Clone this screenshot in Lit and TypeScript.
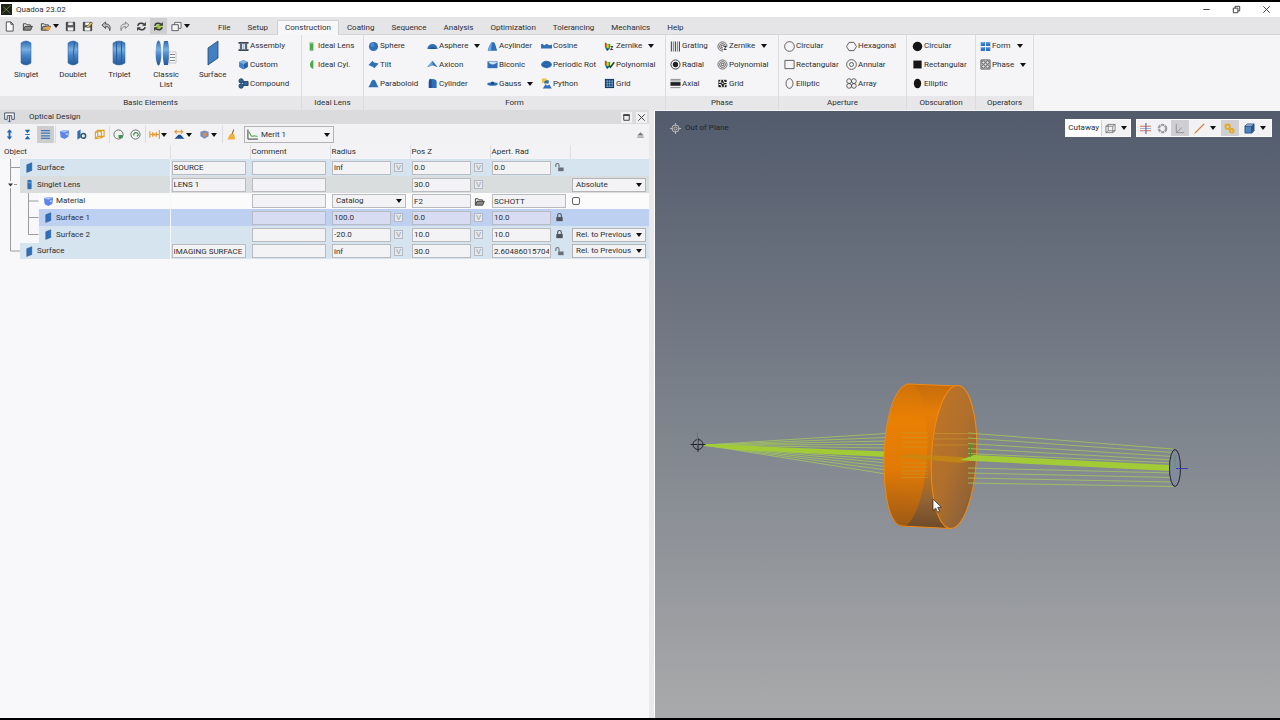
import { LitElement, html, svg, css, nothing, TemplateResult } from "lit";
import { customElement } from "lit/decorators.js";
import { classMap } from "lit/directives/class-map.js";

const BLUE = "#2f6fb8";
const DEEP = "#1f4f8c";
const SKY = "#6ea8dc";

const range = (n: number) => Array.from({ length: n }, (_, i) => i);

const folder = (fill: string) => svg`
  <path d="M1.5 10V3h3l1 1.2h3.6v1.5" fill="#e9e9e6" stroke="#3c3c3c"/>
  <path d="M1.5 10 3.3 5.8h8L9.4 10z" fill=${fill} stroke="#3c3c3c"/>`;
const disk = svg`
  <path d="M1.5 1.5h9v9h-9z" fill="#5a5a5a" stroke="#333"/>
  <path d="M3.5 1.5h5v3h-5z" fill="#eee"/><path d="M3 7h6v3.5H3z" fill="#f4f4f4"/>`;
const cycle = svg`
  <path d="M2 5.2C2.4 2.6 6 1.4 8.6 3.4M10 6.8C9.600 9.400 6 10.600 3.400 8.600" fill="none" stroke="#3a3a3a" stroke-width="1.700"/>
  <path d="M10.800 1v4.200H6.600zM1.200 11V6.800h4.200z" fill="#3a3a3a"/>`;
const cube = (a: string, b: string, c: string) => svg`
  <path d="M6 .8 10.800 3 6 5.400 1.200 3z" fill=${a}/>
  <path d="M1.200 3 6 5.400v6L1.200 8.800z" fill=${b}/><path d="M10.800 3 6 5.400v6l4.800-2.600z" fill=${c}/>`;
const rings = svg`
  <circle cx="6" cy="6" r="5" fill="none" stroke="#555" stroke-width=".9"/>
  <circle cx="6" cy="6" r="3.200" fill="none" stroke="#444" stroke-width=".9"/>
  <circle cx="6" cy="6" r="1.400" fill="none" stroke="#333" stroke-width=".9"/>`;
const heat = svg`
  <path d="M1 1.500 4 3.500 7 3 6.500 8.500 3.500 11 1 7z" fill="#2fae3c"/>
  <path d="M1 1.500 3 2.800v4L1 6z" fill="#e8391c"/><path d="M3 3.200 5 4v4L3 7z" fill="#f5d21b"/>
  <path d="M3.500 11 1.800 8.200 5.500 8z" fill="#1c49c9"/>`;

const ICONS: Record<string, TemplateResult> = {
  new: svg`<path d="M2.500 1h5l2.500 2.600V11H2.500zM7.500 1v2.600H10" fill="#fff" stroke="#444"/>`,
  open: folder("#8a8a84"),
  openStar: svg`${folder("#b9a98a")}<circle cx="9" cy="8" r="2.400" fill="#f0a63a"/>`,
  save: disk,
  saveAs: svg`${disk}<path d="m5 6 5-5 1.500 1.500-5 5z" fill="#e8c94a" stroke="#444" stroke-width=".6"/>`,
  undo: svg`<path d="M1 4.500 5 1v2.200c4 0 6 2.300 4.600 7.300C9 7.300 7.500 6 5 6v2.200z" fill="#bbb" stroke="#3f3f3f" stroke-width=".9"/>`,
  redo: svg`<path d="M11 4.500 7 1v2.200c-4 0-6 2.300-4.600 7.300C3 7.300 4.500 6 7 6v2.200z" fill="#ddd" stroke="#777" stroke-width=".9"/>`,
  cycle,
  cycleAuto: svg`<path d="M3 9 4 4l4-1 1 5-3 2z" fill="#9acb3c"/>${cycle}`,
  windows: svg`<path d="M4 1.500h7v6.500H4z" fill="#f2f2f2" stroke="#666"/><path d="M1 4h7v6.500H1z" fill="#f2f2f2" stroke="#555"/>`,
  assembly: svg`<path d="M.5 1h11v2h-11zM.5 9h11v2h-11z" fill="#3b4654"/><path d="M2 3h2.400v6H2zM7.600 3H10v6H7.600z" fill="#58697e"/><path d="M5 3h2v6H5z" fill="#b9c8d8"/>`,
  custom: cube("#7db0e0", "#3f7fc6", "#265f9f"),
  compound: svg`<g fill="#31649c" stroke="#1d3858" stroke-width=".9"><circle cx="3.400" cy="3.200" r="2.400"/><circle cx="3.400" cy="8.800" r="2.400"/><path d="M6 3.800h5v4.400H6z"/></g>`,
  idealLens: svg`<path d="M4 1.500h4v9H4z" fill="#4ba84b"/><ellipse cx="6" cy="1.800" rx="2" ry="1" fill="#a8dba0"/><ellipse cx="6" cy="10.200" rx="2" ry="1" fill="#88c982"/>`,
  idealCyl: svg`<path d="M8 1C3 3 3 9 8 11z" fill="#4ba84b"/>`,
  sphere: svg`<circle cx="6" cy="6" r="5" fill=${BLUE}/><circle cx="4.800" cy="4.400" r="2.200" fill=${SKY} opacity=".5"/>`,
  tilt: svg`<path d="M.5 6.500 5 2l1.500 1.700L11.500 5 7 10 5.500 8.600z" fill=${BLUE}/>`,
  paraboloid: svg`<path d="M.4 10C2.500 8.500 3 2 6 2s3.500 6.500 5.600 8z" fill=${BLUE}/>`,
  asphere: svg`<path d="M.2 8.600C1.500 1.500 10.500 1.500 11.800 8.600L6 7z" fill=${BLUE}/><path d="M.2 8.600 6 6.500l5.800 2.100z" fill=${DEEP}/>`,
  axicon: svg`<path d="M.2 9 6 2l5.800 7L6 6.800z" fill=${BLUE}/><path d="M6 2v4.800L.2 9z" fill=${SKY}/>`,
  cylinder: svg`<path d="M2 10.800V4c0-4 8.500-4 8.500 0v6.800z" fill=${BLUE}/><path d="M2 4c0-4 2.500-3.500 3-2.500v9.300H2z" fill=${DEEP}/>`,
  acylinder: svg`<path d="M.8 10.500C2 7 3.500 1 6.500 1s3 6 4.700 9.500z" fill=${BLUE}/><path d="M.8 10.500C2 7 3.500 1 6 1c-1 2-1.500 7-1.500 9.500z" fill=${SKY}/>`,
  biconic: svg`<path d="M.5 2.500h11v7.500H.5z" fill=${BLUE}/><path d="M1.500 3C4 7 8 7 11.500 3z" fill="#cfe2f4"/>`,
  gauss: svg`<ellipse cx="6" cy="6.500" rx="5.800" ry="2" fill=${BLUE}/><ellipse cx="6" cy="5.600" rx="2" ry="1.700" fill=${DEEP}/>`,
  cosine: svg`<path d="M0 3.800c1-1 1.500-1 2.500 0s1.500 1 2.500 0 1.500-1 2.500 0 2.500 1 4.500 0v4.400H0z" fill=${BLUE}/>`,
  periodic: svg`<ellipse cx="6" cy="6" rx="5.900" ry="4" fill=${BLUE}/><ellipse cx="6" cy="6" rx="3.300" ry="1.900" fill="none" stroke=${DEEP} stroke-width=".8"/>`,
  python: svg`<path d="M1 .5h5v4.500H3.500L1 6z" fill="#e9c33c"/><path d="M5.500 2.500H8.500V6H3.500V4z" fill="#3a6ea5"/><path d="M2 11.500 5 6.500l1.500 2L9 7l2.800 4.500z" fill=${BLUE}/>`,
  zernikeForm: svg`${heat}<text x="6.500" y="10" font-size="7" font-weight="700" fill="#222">z</text>`,
  polyForm: svg`${heat}<path d="M5.500 7 7 9l4.200-5.500" fill="none" stroke="#1d4a2b" stroke-width="1.800"/>`,
  gridForm: svg`<path d="M1 1h10v10H1z" fill="#16365e"/><path d="M2 3.500h8M2 6.200h8M2 9h8M3.500 2v8M6.200 2v8M9 2v8" stroke=${SKY} stroke-width=".9"/>`,
  grating: svg`${range(5).map((i) => svg`<path d=${`M${1.5 + i * 2.2} .5v11`} stroke=${i % 2 ? "#8a8a8a" : "#4a4a4a"} stroke-width="1.200"/>`)}`,
  radial: svg`<circle cx="6" cy="6" r="5" fill="none" stroke="#333"/><circle cx="6" cy="6" r="2.900" fill="#222"/>`,
  axial: svg`<path d="M.5 4.500h11v4H.5z" fill="#222"/><path d="M.5 1.500h11M.5 3.200h11M.5 10.500h11" stroke="#777" stroke-width=".9"/>`,
  zernikePhase: svg`${rings}<path d="M6.500 6H12v6H6.500z" fill="#f6f6f8"/><text x="7" y="10" font-size="7" font-weight="700" fill="#222">z</text>`,
  polyPhase: rings,
  gridPhase: svg`<path d="M1.500 2h9v8h-9z" fill="#222"/><path d="M4 2v2.500H2M7 2l1 3h3M5.500 10 4 7H2M8 10V7.500l3-.5M5 5l2 1.500" stroke="#eee" stroke-width="1.100" fill="none"/>`,
  circle: svg`<circle cx="6" cy="6" r="5.300" fill="none" stroke="#444" stroke-width=".9"/>`,
  rect: svg`<path d="M1 1.500h10v9H1z" fill="none" stroke="#444" stroke-width=".9"/>`,
  ellipse: svg`<ellipse cx="6" cy="6" rx="3.800" ry="5.300" fill="none" stroke="#444" stroke-width=".9"/>`,
  hexagon: svg`<path d="M3.300 1.500h5.400L11.400 6l-2.700 4.500H3.300L.6 6z" fill="none" stroke="#444" stroke-width=".9"/>`,
  annular: svg`<g fill="none" stroke="#444" stroke-width=".9"><circle cx="6" cy="6" r="5.300"/><circle cx="6" cy="6" r="2.200"/></g>`,
  array: svg`<g fill="none" stroke="#444" stroke-width=".9"><circle cx="3.400" cy="3.400" r="2.600"/><circle cx="8.600" cy="3.400" r="2.600"/><circle cx="3.400" cy="8.600" r="2.600"/><circle cx="8.600" cy="8.600" r="2.600"/></g>`,
  circleFill: svg`<circle cx="6" cy="6" r="5.200" fill="#151515"/>`,
  rectFill: svg`<path d="M1.500 1.700h9v8.600h-9z" fill="#151515"/>`,
  ellipseFill: svg`<ellipse cx="6" cy="6" rx="4" ry="5.300" fill="#151515"/>`,
  opForm: svg`<path d="M.8 1.200h4.700v4.300H.8zM6.500 1.200h4.700v4.300H6.500zM.8 6.500h4.700v4.300H.8zM6.500 6.500h4.700v4.300H6.500z" fill="#2f74c4"/><path d="M1 2h4M7 2h4M1 7.300h4M7 7.300h4" stroke="#8fc0ee"/>`,
  opPhase: svg`<g fill="#e5e5e5" stroke="#333" stroke-width=".8"><path d="M1 1h10v10H1z"/><circle cx="3.800" cy="3.800" r="1.800"/><circle cx="8.200" cy="3.800" r="1.800"/><circle cx="3.800" cy="8.200" r="1.800"/><circle cx="8.200" cy="8.200" r="1.800"/></g>`,
  expand: svg`<path d="M6 .3 9 3.700H7v4.600h2L6 11.700 3 8.300h2V3.700H3z" fill="#1f66b0"/>`,
  collapse: svg`<path d="M3 .8h6L6 4.600zM3 11.200h6L6 7.400z" fill="#1f66b0"/><path d="M3.500 6h5" stroke="#1f66b0"/>`,
  rows: svg`<path d="M1 1.700h10M1 4.500h10M1 7.400h10M1 10.300h10" stroke="#3f78b5" stroke-width="1.300"/>`,
  material: svg`<path d="M1 2.500 6 1l5 1-.8 6.500L6 11 1.800 9z" fill="#5c84ea"/><path d="m1 2.500 5 1.700 5-2.200L6 1z" fill="#a9c0fa"/><path d="m7 5.500 2.500-1.200L9 7z" fill="#d9e4ff"/>`,
  surfaceGear: svg`<path d="M1.500 2.500 5 .5v9l-3.500 2z" fill=${BLUE}/><circle cx="8" cy="7.500" r="2.500" fill="none" stroke="#35566f" stroke-width="1.700"/>`,
  box: svg`<g fill="none" stroke="#e0a021" stroke-width="1.200"><path d="M1.500 3.500 8 2.500v7l-6.500 1z"/><path d="M4 1.500h7v6.500H4zM1.500 3.500 4 1.500M8 9.500l3-1.500M1.500 10.500 4 8"/></g>`,
  refreshLock: svg`<circle cx="6" cy="6" r="5" fill="none" stroke="#4a5a52" stroke-width=".9"/><path d="M6 6.500h4.500V10H6z" fill="#46924f"/>`,
  refreshOpen: svg`<circle cx="6" cy="6" r="5" fill="none" stroke="#4a5a52" stroke-width=".9"/><path d="M4 7c0-4 5-4 5-.5L7.500 8" fill="none" stroke="#46924f" stroke-width="1.300"/>`,
  spacing: svg`<path d="M1 2.500v7M4 3.500v5M8 3.500v5M11.300 1v10" stroke="#e8952c" stroke-width="1.200"/><path d="M1 6h10" stroke="#e8952c"/><path d="m4.500 4 2 2-2 2M7.500 4l-2 2 2 2" fill="none" stroke="#e8952c" stroke-width=".8"/>`,
  fitLens: svg`<path d="M.5 10.500C2.500 9.500 4 6 6 6s3.500 3.500 5.500 4.500z" fill=${DEEP}/><path d="M1 3h8M3 1 1 3l2 2M7.500 1l2 2-2 2" stroke="#e8952c" fill="none" stroke-width="1.200"/>`,
  lensBox: svg`<path d="M1.500 3 6 1.500 10.500 3v5L6 10.500 1.500 8z" fill="#7a90b8"/><circle cx="6.500" cy="6" r="2.200" fill="#d98b5a"/>`,
  broom: svg`<path d="M8.500.5 6.500 6" stroke="#a86a1c" stroke-width="1.200"/><path d="M4.500 5.500h4.500L10 11.500H1.500z" fill="#f0b13a"/>`,
  curve: svg`<path d="M1 .5V11h11" fill="none" stroke="#333"/><path d="M1.500 3c2 0 2 5 4 5s2-1 3-.5 1.500.5 3 .5" fill="none" stroke="#4aa03a" stroke-width="1.100"/>`,
  surface: svg`<path d="M3 3 8.500.8v8.400L3 11.400z" fill=${BLUE} stroke=${DEEP} stroke-width=".5"/>`,
  singlet: svg`<path d="M3.700 1.500Q6 0 8.300 1.500v9Q6 12 3.700 10.500z" fill=${BLUE}/><path d="M3.700 4h4.600" stroke=${SKY}/>`,
  lock: svg`<path d="M2.500 5.500h7V10h-7z" fill="#50555c"/><path d="M4 5.500v-2c0-2.500 4-2.500 4 0v2" fill="none" stroke="#50555c" stroke-width="1.200"/>`,
  unlock: svg`<path d="M4.500 6h6v4h-6z" fill="#6a7178"/><path d="M2 5.500v-2c0-2.500 3.500-2.500 3.500 0V6" fill="none" stroke="#6a7178" stroke-width="1.200"/>`,
  dock: svg`<path d="M.7 1h10.600v7H8.500V4h-5v4H.7z" fill="#f4f6f8" stroke="#3e4f63"/><path d="M6 4v7M4.500 9.500 6 11l1.500-1.500" stroke="#2a62a8" fill="none"/>`,
  app: svg`<path d="M0 0h12v12H0z" fill="#1d231b"/><path d="m1.500 10 9-8.500M2.500 3l7 6.500" stroke="#8c9a45" stroke-width=".8"/>`,
  wire: svg`<g fill="none" stroke="#666" stroke-width=".8"><path d="M1 3.500h7.500v7H1zM3.500 1.500H11v7H3.500zM1 3.500l2.500-2M8.500 3.500l2.500-2M8.500 10.500l2.500-2M1 10.500l2.500-2"/></g>`,
  align: svg`<path d="M0 3.500h12M0 8.500h12" stroke="#e0705c" stroke-width="1.200"/><path d="M0 6h12" stroke="#9aa8c8"/><path d="M6.500 0v12" stroke="#3b6cb4" stroke-width="1.200"/>`,
  aperture: svg`<circle cx="6" cy="6" r="4" fill="none" stroke="#9a9da2" stroke-width="2.600" stroke-dasharray="3.400 .8"/>`,
  axes: svg`<path d="M2.500 1v9.500H11M2.500 10.500 8.500 5" fill="none" stroke="#8d9196"/>`,
  ray: svg`<path d="M1 11 11 1" stroke="#dd7a28" stroke-width="1.400"/>`,
  gears: svg`<g fill="none" stroke="#e5a91e" stroke-width="2"><circle cx="4" cy="4" r="2.400"/><circle cx="8.500" cy="8.500" r="2"/></g>`,
  solid: svg`<path d="M1 3.500h7.500V11H1z" fill="#4f83bb" stroke="#24466e" stroke-width=".8"/><path d="M1 3.500 3.500 1H11L8.500 3.500z" fill="#9cc0e4" stroke="#24466e" stroke-width=".8"/><path d="M8.500 3.500 11 1v7.300L8.500 11z" fill="#2f5e94" stroke="#24466e" stroke-width=".8"/>`,
  target: svg`<g fill="none" stroke="#c4c1b8"><circle cx="6" cy="6" r="3.900"/><circle cx="6" cy="6" r="1.700"/><path d="M6 0v3M6 9v3M0 6h3M9 6h3"/></g>`,
  eject: svg`<path d="M2.500 7 6 3.500 9.500 7z" fill="#777"/><path d="M2.500 8.800h7" stroke="#777"/>`,
  min: svg`<path d="M2.500 6h7" stroke="#333"/>`,
  restore: svg`<path d="M2.500 4.500h5v5h-5zM4.500 4.500v-2h5v5h-2" fill="none" stroke="#333"/>`,
  close: svg`<path d="m2.500 2.500 7 7M9.500 2.500l-7 7" stroke="#333"/>`,
  max: svg`<path d="M3 3h6v6H3z" fill="none" stroke="#333"/><path d="M2.500 3.500h7" stroke="#333" stroke-width="1.500"/>`,
};

const lensShape = (x: number, w: number) =>
  svg`<path d=${`M${x} 3Q${x + w / 2} -1 ${x + w} 3V23Q${x + w / 2} 27 ${x} 23Z`} fill="url(#glass)" stroke="#2b5f9c" stroke-width=".5"/>`;
const BIG: Record<string, TemplateResult> = {
  Singlet: lensShape(9, 10),
  Doublet: svg`${lensShape(9, 10)}<path d="M15.500 1.500q-2 11 0 23" fill="none" stroke="#2b5f9c"/>`,
  Triplet: svg`${lensShape(8, 12)}<path d="M11.500 1.500v23M16.500 1.500v23" stroke="#2b5f9c"/>`,
  "Classic List": svg`
    <ellipse cx="6.500" cy="13" rx="2.900" ry="12.500" fill="url(#glass)"/><path d="M12 1h4q2.500 12 0 24h-4q-2.500-12 0-24z" fill="url(#glass)"/>
    <path d="M17 12h7v11h-7z" fill="#fafafa" stroke="#aaa" stroke-width=".6"/><path d="M18 14.500h5M18 17.500h5M18 20.500h5" stroke="#666" stroke-width=".8"/>`,
  Surface: svg`<path d="M9 8 19 1v17L9 25z" fill="#4380c2" stroke="#24466e" stroke-width=".8"/>`,
};

const icon = (name: string) => html`<svg class="icon" viewBox="0 0 12 12" aria-hidden="true">${ICONS[name]}</svg>`;
const caret = html`<svg class="caret" viewBox="0 0 6 4" aria-hidden="true"><path d="M0 0h6L3 4z" fill="#111"/></svg>`;

const shared = css`
  * { box-sizing: border-box; }
  button, input, select, a { font: inherit; color: inherit; margin: 0; text-decoration: none; }
  button { border: 0; background: none; padding: 0; display: flex; align-items: center; }
  .icon { width: 11px; height: 11px; flex: none; display: block; overflow: visible; }
  .caret { width: 6px; height: 4px; flex: none; display: block; pointer-events: none; }
  .drop { display: grid; align-items: center; }
  .drop select {
    grid-area: 1 / 1; appearance: none; width: 100%; height: 14px; padding: 0 3px;
    border: 1px solid #b4b4b6; border-radius: 0; background: #f3f3f5; outline: 0;
  }
  .drop .caret { grid-area: 1 / 1; justify-self: end; margin-right: 4px; }
`;

type Item = [icon: string, label: string, menu?: boolean];
interface Group { name: string; cls: string; big?: string[]; columns: Item[][]; }

const GROUPS: Group[] = [
  {
    name: "Basic Elements", cls: "basic", big: ["Singlet", "Doublet", "Triplet", "Classic List", "Surface"],
    columns: [[["assembly", "Assembly"], ["custom", "Custom"], ["compound", "Compound"]]],
  },
  { name: "Ideal Lens", cls: "ideal", columns: [[["idealLens", "Ideal Lens"], ["idealCyl", "Ideal Cyl."]]] },
  {
    name: "Form", cls: "form", columns: [
      [["sphere", "Sphere"], ["tilt", "Tilt"], ["paraboloid", "Paraboloid"]],
      [["asphere", "Asphere", true], ["axicon", "Axicon"], ["cylinder", "Cylinder"]],
      [["acylinder", "Acylinder"], ["biconic", "Biconic"], ["gauss", "Gauss", true]],
      [["cosine", "Cosine"], ["periodic", "Periodic Rot"], ["python", "Python"]],
      [["zernikeForm", "Zernike", true], ["polyForm", "Polynomial"], ["gridForm", "Grid"]],
    ],
  },
  {
    name: "Phase", cls: "phase", columns: [
      [["grating", "Grating"], ["radial", "Radial"], ["axial", "Axial"]],
      [["zernikePhase", "Zernike", true], ["polyPhase", "Polynomial"], ["gridPhase", "Grid"]],
    ],
  },
  {
    name: "Aperture", cls: "aperture", columns: [
      [["circle", "Circular"], ["rect", "Rectangular"], ["ellipse", "Elliptic"]],
      [["hexagon", "Hexagonal"], ["annular", "Annular"], ["array", "Array"]],
    ],
  },
  { name: "Obscuration", cls: "obscuration", columns: [[["circleFill", "Circular"], ["rectFill", "Rectangular"], ["ellipseFill", "Elliptic"]]] },
  { name: "Operators", cls: "operators", columns: [[["opForm", "Form", true], ["opPhase", "Phase", true]]] },
];

const TABS = ["File", "Setup", "Construction", "Coating", "Sequence", "Analysis", "Optimization", "Tolerancing", "Mechanics", "Help"];
const QUICK: Item[] = [
  ["new", "New"], ["open", "Open"], ["openStar", "Open recent", true], ["save", "Save"], ["saveAs", "Save as"],
  ["undo", "Undo"], ["redo", "Redo"], ["cycle", "Update"], ["cycleAuto", "Auto update"], ["windows", "Windows", true],
];

@customElement("ribbon-bar")
class RibbonBar extends LitElement {
  static styles = [shared, css`
    :host { display: block; background: #f5f5f8; }
    .top { display: flex; align-items: flex-end; background: #e5e5e7; height: 18px; border-bottom: 1px solid #d4d4d6; }
    .quick { display: flex; align-items: center; width: 210px; height: 16px; }
    .quick button { width: 17px; height: 16px; justify-content: center; }
    .quick button:first-child { width: 19px; }
    .quick .menu { width: 26px; gap: 2px; }
    .quick .undo { width: 20px; }
    .quick .on { background: #cfcfd1; }
    .tabs { display: flex; height: 15px; margin-bottom: -1px; }
    .tabs button { padding: 0 8px; border: 1px solid transparent; border-width: 0 1px 0 0; height: 15px; }
    .tabs .active { background: #f7f7fa; border: 1px solid #d0d0d2; border-bottom: 0; padding: 0 7px; }
    .groups { display: flex; }
    .group { border-right: 1px solid #dcdcde; display: flex; flex-direction: column; flex: none; }
    .body { display: grid; height: 61px; padding: 2px 0 3px 4px; }
    .name { background: #e7e7e9; height: 14px; line-height: 14px; text-align: center; }
    .basic { width: 302px; } .basic .body { grid-template-columns: repeat(5, 1fr) 65px; padding-left: 3px; }
    .basic .col { padding-left: 2px; }
    .ideal { width: 62px; }
    .form { width: 302px; } .form .body { grid-template-columns: 59px 60px 54px 63px auto; }
    .phase { width: 113px; } .phase .body { grid-template-columns: 47px auto; }
    .aperture { width: 128px; } .aperture .body { grid-template-columns: 62px auto; padding-left: 5px; }
    .obscuration { width: 69px; } .obscuration .body { padding-left: 5px; }
    .operators { width: 58px; }
    .col { display: grid; grid-template-rows: repeat(3, 1fr); justify-items: start; white-space: nowrap; }
    .col button { gap: 1px; }
    .col .caret { margin-left: 5px; }
    .big { flex-direction: column; padding-top: 3px; line-height: 10px; text-align: center; gap: 4px; }
    .big svg { width: 28px; height: 26px; flex: none; }
    .big span { max-width: 32px; }
  `];

  render() {
    return html`
      <div class="top">
        <div class="quick">
          ${QUICK.map(([i, label, menu]) => html`
            <button class=${classMap({ menu: !!menu, on: i === "cycleAuto", undo: i === "undo" })} aria-label=${label}>${icon(i)}${menu ? caret : nothing}</button>`)}
        </div>
        <nav class="tabs">${TABS.map((t) => html`<button class=${classMap({ active: t === "Construction" })}>${t}</button>`)}</nav>
      </div>
      <div class="groups">${GROUPS.map((g) => html`
        <section class="group ${g.cls}">
          <div class="body">
            ${g.big?.map((b) => html`
              <button class="big">
                <svg viewBox="0 0 28 26" aria-hidden="true">
                  <defs><linearGradient id="glass" x2="0" y2="1"><stop offset="0" stop-color="#2d69ae"/><stop offset=".35" stop-color="#78afe2"/><stop offset=".6" stop-color="#4684c6"/><stop offset="1" stop-color="#24599a"/></linearGradient></defs>
                  ${BIG[b]}
                </svg><span>${b}</span>
              </button>`)}
            ${g.columns.map((c) => html`<div class="col">${c.map(([i, label, menu]) => html`
              <button>${icon(i)}<span>${label}</span>${menu ? caret : nothing}</button>`)}</div>`)}
          </div>
          <div class="name">${g.name}</div>
        </section>`)}
      </div>`;
  }
}

interface Field { value: string; kind?: "input" | "select" | "folder"; }
interface Row {
  label: string; icon: string; depth: number; tone: string;
  name?: string; radius?: Field; pos?: Field;
  ap?: string; lock?: string; mode?: string; tick?: boolean;
}
const ROWS: Row[] = [
  { label: "Surface", icon: "surface", depth: 1, tone: "blue", name: "SOURCE", radius: { value: "inf" }, pos: { value: "0.0" }, ap: "0.0", lock: "unlock" },
  { label: "Singlet Lens", icon: "singlet", depth: 1, tone: "grey", name: "LENS 1", pos: { value: "30.0" }, mode: "Absolute" },
  { label: "Material", icon: "material", depth: 2, tone: "plain", radius: { value: "Catalog", kind: "select" }, pos: { value: "F2", kind: "folder" }, ap: "SCHOTT", tick: true },
  { label: "Surface 1", icon: "surface", depth: 2, tone: "picked", radius: { value: "100.0" }, pos: { value: "0.0" }, ap: "10.0", lock: "lock" },
  { label: "Surface 2", icon: "surface", depth: 2, tone: "blue", radius: { value: "-20.0" }, pos: { value: "10.0" }, ap: "10.0", lock: "lock", mode: "Rel. to Previous" },
  { label: "Surface", icon: "surface", depth: 1, tone: "blue", name: "IMAGING SURFACE", radius: { value: "inf" }, pos: { value: "30.0" }, ap: "2.60486015704", lock: "unlock", mode: "Rel. to Previous" },
];
const TREE = [
  "M10.500 0v17M10.500 8.500h10",
  "M10.500 0v5M10.500 12v5M14 8.500h3",
  "M10.500 0v17M28.500 0v17M28.500 8.500h10",
  "M10.500 0v17M28.500 0v17M28.500 8.500h10",
  "M10.500 0v17M28.500 0v8.500h10",
  "M10.500 0v8.500h10",
];
const TOOLS: { icon: string; label: string; cls?: string; menu?: boolean }[] = [
  { icon: "expand", label: "Expand all" }, { icon: "collapse", label: "Collapse all" }, { icon: "rows", label: "Show rows", cls: "on" },
  { icon: "material", label: "Materials", cls: "sep" }, { icon: "surfaceGear", label: "Surface settings" }, { icon: "box", label: "Bounding box" },
  { icon: "refreshLock", label: "Update locked", cls: "sep" }, { icon: "refreshOpen", label: "Update" },
  { icon: "spacing", label: "Spacing", cls: "sep", menu: true }, { icon: "fitLens", label: "Fit", menu: true },
  { icon: "lensBox", label: "Lens view", menu: true }, { icon: "broom", label: "Clean up", cls: "last" },
];

@customElement("design-panel")
class DesignPanel extends LitElement {
  static styles = [shared, css`
    :host { display: block; background: #f8f8fa; border-right: 1px solid #fff; }
    .inner { padding-right: 5px; background: linear-gradient(to left, #e9e9eb 5px, transparent 5px); min-height: 100%; }
    .title { display: flex; align-items: center; height: 14px; background: #dbdbdd; padding: 0 2px 0 4px; }
    .title span { margin: 0 auto 0 14px; }
    .title button { margin-left: 4px; background: #f0f0f2; }
    .tools { display: flex; align-items: center; height: 21px; background: #f2f2f4; padding-left: 1px; }
    .tools button { width: 17px; height: 17px; justify-content: center; margin-right: 1px; }
    .tools .menu { width: 25px; gap: 1px; margin: 0; }
    .tools .on { background: #cdcdd0; }
    .tools .sep { border-left: 1px solid #dcdcde; }
    .tools .last { margin: 0 5px 0 2px; border-left: 1px solid #dcdcde; }
    .merit select { height: 17px; padding-left: 16px; }
    .merit .icon { grid-area: 1 / 1; z-index: 1; margin-left: 3px; }
    .tools .eject { margin: 0 0 0 auto; }
    table { width: 100%; table-layout: fixed; border-collapse: collapse; }
    th { text-align: left; font-weight: 400; height: 14px; padding: 0 1px; background: #f3f3f5; border-right: 1px solid #dedee0; }
    th:first-child { padding-left: 4px; } th:last-child { border: 0; }
    .w-object { width: 170px; } .w-name { width: 80px; }
    td { padding: 0 1px 0 2px; height: 17px; }
    tr:nth-child(3n) td { height: 16px; }
    td:first-child { padding: 0; border-right: 1px solid #f4f8fb; }
    td:nth-child(2) { padding-left: 1px; }
    .blue { --tone: #d5e4ef; } .grey { --tone: #dadddd; } .plain { --tone: #fbfbfc; } .picked { --tone: #bdd0f2; --box: #d8dcf3; }
    tbody td:not(:first-child), .label { background: var(--tone); }
    .object, .cell { display: flex; align-items: center; }
    .object { height: 100%; }
    .tree { flex: none; height: 17px; width: 20px; }
    .deep .tree { width: 39px; }
    .label { display: flex; align-items: center; flex: 1; align-self: stretch; gap: 2px; padding-left: 4px; height: 17px; }
    tr:nth-child(3n) .label, tr:nth-child(3n) .tree { height: 16px; }
    .cell { gap: 3px; }
    input.box { display: block; width: 74px; height: 14px; padding: 0 1px; border: 1px solid #b9bbbf; border-radius: 0; background: var(--box, #f3f3f5); outline: 0; }
    .cell.flagged input.box { width: 59px; }
    .v { width: 9px; height: 9px; border: 1px solid #b4b9c2; color: #9aa0aa; justify-content: center; line-height: 7px; background: #e6e9ee; }
    input[type="checkbox"] { appearance: none; width: 8px; height: 8px; border: 1px solid #666; border-radius: 2px; background: #fff; display: block; }
    .drop { width: 74px; }
    .cell .drop select { border-color: #b9bbbf; }
    .merit.drop { width: 90px; }
  `];

  private box(label: string, value = "") {
    return html`<input class="box" aria-label=${label} .value=${value}>`;
  }
  private drop(label: string, value: string) {
    return html`<div class="drop"><select aria-label=${label}><option>${value}</option></select>${caret}</div>`;
  }
  private field(label: string, f?: Field) {
    if (!f) return nothing;
    if (f.kind === "select") return html`<div class="cell">${this.drop(label, f.value)}</div>`;
    return html`<div class="cell flagged">${this.box(label, f.value)}
      ${f.kind === "folder" ? html`<button aria-label="Browse">${icon("open")}</button>` : html`<button class="v">V</button>`}</div>`;
  }

  render() {
    return html`<div class="inner">
      <div class="title">${icon("dock")}<span>Optical Design</span>
        <button aria-label="Float">${icon("max")}</button><button aria-label="Close">${icon("close")}</button></div>
      <div class="tools">
        ${TOOLS.map((t) => html`<button class="${t.cls ?? ""} ${t.menu ? "menu" : ""}" aria-label=${t.label}>${icon(t.icon)}${t.menu ? caret : nothing}</button>`)}
        <div class="drop merit">${icon("curve")}<select aria-label="Merit"><option>Merit 1</option></select>${caret}</div>
        <button class="eject" aria-label="Hide toolbar">${icon("eject")}</button>
      </div>
      <table>
        <thead><tr><th class="w-object">Object</th><th class="w-name"></th><th class="w-name">Comment</th><th class="w-name">Radius</th>
          <th class="w-name">Pos Z</th><th class="w-name">Apert. Rad</th><th></th></tr></thead>
        <tbody>${ROWS.map((r, i) => html`
          <tr class=${r.tone}>
            <td><div class="object ${r.depth > 1 ? "deep" : ""}">
              <svg class="tree" viewBox=${`0 0 ${r.depth > 1 ? 39 : 20} 17`} preserveAspectRatio="none" aria-hidden="true">
                <path d=${TREE[i]} fill="none" stroke="#9a9a9c"/>${i === 1 ? svg`<path d="M8 7.500h5l-2.500 3z" fill="#333"/>` : nothing}</svg>
              <div class="label">${icon(r.icon)}<span>${r.label}</span></div></div></td>
            <td>${r.name ? this.box("Name", r.name) : nothing}</td>
            <td>${this.box("Comment")}</td>
            <td>${this.field("Radius", r.radius)}</td>
            <td>${this.field("Pos Z", r.pos)}</td>
            <td>${r.ap ? html`<div class="cell ${r.lock ? "flagged" : ""}">${this.box("Aperture radius", r.ap)}${r.lock ? html`<button aria-label="Lock">${icon(r.lock)}</button>` : nothing}</div>` : nothing}</td>
            <td>${r.mode ? this.drop("Position mode", r.mode) : nothing}${r.tick ? html`<input type="checkbox" aria-label="Use material">` : nothing}</td>
          </tr>`)}</tbody>
      </table>
    </div>`;
  }
}

const line = (x1: number, y1: number, x2: number, y2: number) => svg`<path d=${`M${x1} ${y1}L${x2} ${y2}`}/>`;
const FAN_IN = [433.5, 437.5, 441, 444.5, 448, 460, 463, 466.5, 470, 474];
const FAN_OUT: [number, number][] = [[433, 449], [438, 452.5], [443.5, 456.5], [448.5, 460], [453.5, 463], [468, 473], [473, 477.5], [478, 482], [483, 486.5]];

@customElement("scene-view")
class SceneView extends LitElement {
  static styles = [shared, css`
    :host { display: flex; flex-direction: column; position: relative; margin-top: 1px; background: linear-gradient(#525b6c, #7d838c 50%, #a9aaab); min-width: 0; }
    .bar { display: flex; align-items: center; padding: 8px 8px 0 15px; position: relative; z-index: 1; }
    .plane { display: flex; align-items: center; gap: 4px; margin-right: auto; color: #20242b; }
    .set { display: flex; height: 18px; background: #f2f2f5; border: 1px solid #fbfbfd; margin-left: 5px; }
    .set button { padding: 0 2px; min-width: 17px; justify-content: center; gap: 6px; }
    .set .cut { background: #fff; padding: 0 2px; }
    .set .menu { width: 29px; padding: 0 4px 0 3px; border-left: 1px solid #d2d2d6; gap: 5px; }
    .set .wide { width: 33px; }
    .set .on { background: #cfcfd2; }
    .scene { position: absolute; inset: 0; width: 100%; height: 100%; }
  `];

  render() {
    return html`
      <svg class="scene" viewBox="655 111 625 607" role="img" aria-label="Ray trace of a singlet lens">
        <defs>
          <linearGradient id="rim" x1="0" y1="0" x2="0" y2="1"><stop offset="0" stop-color="#cf7209"/><stop offset=".25" stop-color="#ea8003"/><stop offset=".6" stop-color="#e27a05"/><stop offset="1" stop-color="#9c5a16"/></linearGradient>
          <linearGradient id="tube" x1="0" y1="0" x2="0" y2="1"><stop offset="0" stop-color="#c46c0c"/><stop offset=".2" stop-color="#e67e06"/><stop offset=".55" stop-color="#cf760f"/><stop offset=".8" stop-color="#936434"/><stop offset="1" stop-color="#6d4a28"/></linearGradient>
          <linearGradient id="face" x1="0" y1="0" x2="1" y2="1"><stop offset="0" stop-color="#c07526"/><stop offset=".5" stop-color="#b06f2c"/><stop offset=".8" stop-color="#936436"/><stop offset="1" stop-color="#6b4c2d"/></linearGradient>
        </defs>
        <g fill="none" stroke="#a5c95a" stroke-width=".8">${FAN_IN.map((y) => line(704, 445, 886, y))}</g>
        <path d="M704 444 886 451.500v5.500L740 450 704 446z" fill="#a2cb36"/>
        <g fill="none" stroke-width="1"><circle cx="698" cy="444.500" r="5" stroke="#23272c"/><path d="M690.500 444.500h15M698 438v14" stroke="#23272c"/><path d="M697.500 432.500v12" stroke="#2aa04a"/></g>
        <path d="M909 384 958 386 950 528.500 902 526z" fill="url(#tube)"/>
        <ellipse cx="905.500" cy="455" rx="21.500" ry="71.500" transform="rotate(3 905.500 455)" fill="url(#rim)"/>
        <path d="M902 526C888 524 884 490 884 462 884 424 893 387 908 384L958 386M902 526l48 2.500" fill="none" stroke="#f08a12"/>
        <ellipse cx="954" cy="457" rx="22.500" ry="71.500" transform="rotate(3 954 457)" fill="url(#face)" stroke="#f28c14"/>
        <g stroke="#c79c2c" stroke-width=".8" opacity=".75">${[433, 437.500, 442, 447, 463, 467, 471, 474, 477.500].map((y) => line(902, y, 928, y))}
          ${[433.5, 439, 445].map((y) => line(934, y, 968, y))}</g>
        <path d="M897 457 908 454l54 3 12 3-14 3-50-5z" fill="#c48a10" opacity=".8"/>
        <g fill="none" stroke="#a5c95a" stroke-width=".8">${FAN_OUT.map(([a, b]) => line(968, a, 1173, b))}</g>
        <path d="M960 460 974 455 1170 465v6L974 461z" fill="#a2cb36"/>
        <path d="M970.500 444v13" stroke="#3f9a2c"/>
        <ellipse cx="1175" cy="468" rx="5.500" ry="18.500" fill="#8189a0" fill-opacity=".8" stroke="#22252e"/>
        <path d="M1175 455v13" stroke="#4f9b6a"/><path d="M1176 468.500h12" stroke="#3a3fb4"/>
        <path d="M933 499v11.500l2.700-2.400 1.800 4 2-.9-1.800-3.900h3.600z" fill="#fff" stroke="#222" stroke-width=".7"/>
      </svg>
      <div class="bar">
        <div class="plane">${icon("target")}<span>Out of Plane</span></div>
        <div class="set"><button class="cut">Cutaway</button><button class="menu" aria-label="Projection">${icon("wire")}${caret}</button></div>
        <div class="set">
          <button aria-label="Align">${icon("align")}</button><button aria-label="Aperture">${icon("aperture")}</button>
          <button class="on" aria-label="Axes">${icon("axes")}</button><button class="menu wide" aria-label="Rays">${icon("ray")}${caret}</button>
          <button class="on" aria-label="Settings">${icon("gears")}</button><button class="menu wide" aria-label="Shading">${icon("solid")}${caret}</button>
        </div>
      </div>`;
  }
}

@customElement("app-root")
class AppRoot extends LitElement {
  static styles = [shared, css`
    :host {
      display: flex; flex-direction: column; min-height: 100vh; box-sizing: border-box;
      border: solid #000; border-width: 2px 0; background: #f5f5f8; color: #2e2e30;
      font: 8px/10px Roboto, "Open Sans", sans-serif;
    }
    .title { display: flex; align-items: center; gap: 4px; height: 15px; padding: 0 8px 0 1px; background: #fff; }
    .title span { margin-right: auto; }
    .title button { margin-left: 15px; }
    .main { flex: 1; display: grid; grid-template-columns: minmax(0, 655fr) minmax(0, 625fr); }
  `];

  render() {
    return html`
      <header class="title">${icon("app")}<span>Quadoa 23.02</span>
        <button aria-label="Minimize">${icon("min")}</button><button aria-label="Restore">${icon("restore")}</button><button aria-label="Close">${icon("close")}</button></header>
      <ribbon-bar></ribbon-bar>
      <main class="main"><design-panel></design-panel><scene-view></scene-view></main>`;
  }
}
